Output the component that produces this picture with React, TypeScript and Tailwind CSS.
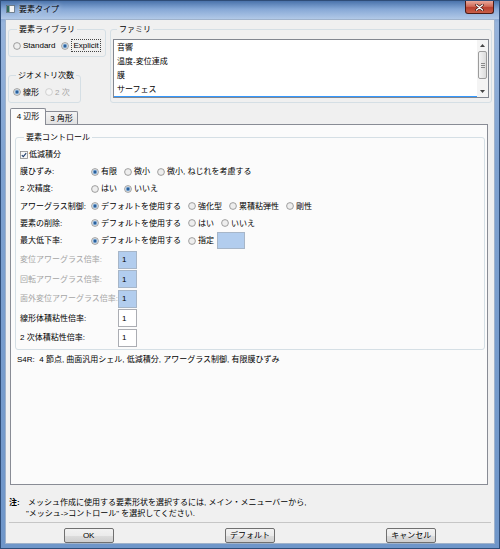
import React from "react"

// Win7 style "要素タイプ" dialog

function RadioMark({ checked = false, disabled = false }: { checked?: boolean; disabled?: boolean }) {
  return (
    <svg width="8" height="8" viewBox="0 0 8 8" className="shrink-0">
      <circle
        cx="4"
        cy="4"
        r="3.4"
        fill={disabled ? "#f6f6f6" : "#eeeeee"}
        stroke={disabled ? "#c8c8c8" : "#8a8a8a"}
        strokeWidth="0.8"
      />
      {checked && <circle cx="4" cy="4" r="1.9" fill="#2a5f99" stroke="#86b4e2" strokeWidth="0.7" />}
    </svg>
  )
}

function Radio({
  label,
  checked,
  disabled,
  focus,
}: {
  label: string
  checked?: boolean
  disabled?: boolean
  focus?: boolean
}) {
  return (
    <span className="flex items-center gap-[2px] whitespace-nowrap">
      <RadioMark checked={checked} disabled={disabled} />
      <span
        className={`${disabled ? "text-[#a6a6a6]" : "text-black"} ${
          focus ? "border border-dotted border-[#444] px-[1px] leading-[11px]" : ""
        }`}
      >
        {label}
      </span>
    </span>
  )
}

function Row({ label, children }: { label: string; children: React.ReactNode }) {
  return (
    <div className="flex h-[17.2px] items-center">
      <span className="w-[71px] shrink-0 whitespace-nowrap">{label}</span>
      <div className="flex items-center gap-[7px]">{children}</div>
    </div>
  )
}

function NumRow({ label, disabled = false }: { label: string; disabled?: boolean }) {
  return (
    <div className="flex h-[19.5px] items-center">
      <span className={`w-[98px] shrink-0 whitespace-nowrap ${disabled ? "text-[#a6a6a6]" : ""}`}>{label}</span>
      <div
        className={`flex h-[18px] w-[19px] items-center border pl-[3px] ${
          disabled ? "border-[#a7b6c8] bg-[#b2cdee]" : "border-[#abadb3] bg-white"
        }`}
      >
        1
      </div>
    </div>
  )
}

function Button({ label }: { label: string }) {
  return (
    <button
      type="button"
      className="flex h-[15px] w-[50px] items-center justify-center rounded-[2px] border border-[#707070] bg-[linear-gradient(180deg,#f2f2f2_0%,#ebebeb_50%,#dddddd_51%,#cfcfcf_100%)] text-[8px] leading-none text-black"
    >
      {label}
    </button>
  )
}

export default function App() {
  return (
    <div className="flex h-[549px] w-[500px] flex-col border border-[#2f4d78] bg-[linear-gradient(180deg,#5a81b7_0%,#97b4dc_4%,#7fa2d0_30%,#6f96c9_100%)] font-['Liberation_Sans','Noto_Sans_CJK_JP',sans-serif] text-[8px] leading-[11px] text-black">
      {/* Title bar */}
      <div className="flex h-[18px] items-start bg-[linear-gradient(180deg,#4a73ab_0%,#86a8d6_45%,#b2c9e7_100%)]">
        <svg width="9" height="8" viewBox="0 0 9 8" className="ml-[5px] mt-[4px] shrink-0">
          <rect x="0.5" y="0.5" width="8" height="7" fill="#f4f4f4" stroke="#5d6b78" strokeWidth="0.8" />
          <rect x="1" y="1" width="2.5" height="6" fill="#2f6b5c" />
        </svg>
        <span className="ml-[4px] mt-[3px] [text-shadow:0_0_5px_rgba(255,255,255,0.95)]">要素タイプ</span>
        <div className="ml-auto mr-[5px] flex h-[13px] w-[29px] items-center justify-center rounded-b-[3px] border border-t-0 border-[#4b1b16] bg-[linear-gradient(180deg,#e9a99b_0%,#d06a58_45%,#b8402f_55%,#c9604a_100%)]">
          <svg width="9" height="7" viewBox="0 0 9 7">
            <path d="M1.5 1 L7.5 6 M7.5 1 L1.5 6" stroke="#3a1410" strokeWidth="2.6" strokeLinecap="round" />
            <path d="M1.5 1 L7.5 6 M7.5 1 L1.5 6" stroke="#ffffff" strokeWidth="1.4" strokeLinecap="round" />
          </svg>
        </div>
      </div>

      {/* Client area */}
      <div className="mx-[4px] mb-[4px] flex flex-1 flex-col border border-[#9fb2cb] bg-[#f0f0f0] px-[2px] pt-[4px]">
        {/* Top section */}
        <div className="flex gap-[4px]">
          <div className="flex w-[98px] shrink-0 flex-col">
            <fieldset className="rounded-[3px] border border-[#d5dfe5] px-[4px] pb-[4px] pt-[4px]">
              <legend className="ml-[4px] whitespace-nowrap px-[2px]">要素ライブラリ</legend>
              <div className="flex h-[13px] items-center gap-[6px]">
                <Radio label="Standard" />
                <Radio label="Explicit" checked focus />
              </div>
            </fieldset>
            <fieldset className="mt-[13px] w-[68px] rounded-[3px] border border-[#d5dfe5] px-[4px] pb-[4px] pt-[5px]">
              <legend className="ml-[3px] whitespace-nowrap px-[2px]">ジオメトリ次数</legend>
              <div className="flex h-[12px] items-center gap-[6px]">
                <Radio label="線形" checked />
                <Radio label="2 次" disabled />
              </div>
            </fieldset>
          </div>
          <fieldset className="flex-1 rounded-[3px] border border-[#d5dfe5] px-[2px] pb-[3px] pt-[4px]">
            <legend className="ml-[4px] px-[2px]">ファミリ</legend>
            <div className="flex h-[59px] overflow-hidden border border-[#828790] bg-white">
              <div className="flex-1 overflow-hidden">
                {["音響", "温度-変位連成", "膜", "サーフェス"].map((item) => (
                  <div key={item} className="flex h-[14px] items-center pl-[3px]">
                    {item}
                  </div>
                ))}
                <div className="h-[2px] bg-[#3399ff]" />
              </div>
              <div className="flex w-[11px] flex-col items-center bg-[#f4f4f4]">
                <div className="flex h-[11px] items-center justify-center">
                  <svg width="5" height="3" viewBox="0 0 5 3">
                    <path d="M0 3 L2.5 0 L5 3 Z" fill="#444" />
                  </svg>
                </div>
                <div className="flex h-[28px] w-[9px] flex-col items-center justify-center gap-[1px] rounded-[2px] border border-[#9c9c9c] bg-[linear-gradient(90deg,#f4f4f4,#dcdcdc)]">
                  <div className="h-px w-[4px] bg-[#8a8a8a]" />
                  <div className="h-px w-[4px] bg-[#8a8a8a]" />
                  <div className="h-px w-[4px] bg-[#8a8a8a]" />
                </div>
                <div className="flex-1" />
                <div className="flex h-[11px] items-center justify-center">
                  <svg width="5" height="3" viewBox="0 0 5 3">
                    <path d="M0 0 L5 0 L2.5 3 Z" fill="#444" />
                  </svg>
                </div>
              </div>
            </div>
          </fieldset>
        </div>

        {/* Tabs */}
        <div className="ml-[2px] mr-[4px] mt-[5px] flex flex-col">
          <div className="relative z-10 flex items-end">
            <div className="-mb-px flex h-[17px] w-[36px] items-center justify-center rounded-t-[2px] border border-b-0 border-[#898c95] bg-[#fbfbfb] pb-[1px]">
              4 辺形
            </div>
            <div className="flex h-[13px] w-[32px] items-center justify-center rounded-tr-[2px] border border-l-0 border-b-0 border-[#898c95] bg-[linear-gradient(180deg,#f3f3f3,#e1e1e1)]">
              3 角形
            </div>
          </div>
          <div className="flex h-[361px] flex-col border border-[#898c95] bg-[#fbfbfb] pl-[4px] pr-[2px] pt-[7px]">
            <fieldset className="rounded-[3px] border border-[#d5dfe5] px-[4px] pb-[1px] pt-[3px]">
              <legend className="ml-[4px] px-[2px]">要素コントロール</legend>
              <div className="flex h-[17.2px] items-center gap-[1px]">
                <svg width="8" height="8" viewBox="0 0 8 8" className="shrink-0">
                  <rect x="0.5" y="0.5" width="7" height="7" fill="#f7f7f7" stroke="#8a8a8a" strokeWidth="0.8" />
                  <path d="M1.8 4.1 L3.3 5.7 L6.2 2.1" fill="none" stroke="#22406e" strokeWidth="1.1" />
                </svg>
                <span>低減積分</span>
              </div>
              <Row label="膜ひずみ:">
                <Radio label="有限" checked />
                <Radio label="微小" />
                <Radio label="微小, ねじれを考慮する" />
              </Row>
              <Row label="2 次精度:">
                <Radio label="はい" />
                <Radio label="いいえ" checked />
              </Row>
              <Row label="アワーグラス制御:">
                <Radio label="デフォルトを使用する" checked />
                <Radio label="強化型" />
                <Radio label="累積粘弾性" />
                <Radio label="剛性" />
              </Row>
              <Row label="要素の削除:">
                <Radio label="デフォルトを使用する" checked />
                <Radio label="はい" />
                <Radio label="いいえ" />
              </Row>
              <Row label="最大低下率:">
                <Radio label="デフォルトを使用する" checked />
                <span className="flex items-center gap-[3px]">
                  <Radio label="指定" />
                  <span className="h-[17px] w-[28px] border border-[#a7b6c8] bg-[#b2cdee]" />
                </span>
              </Row>
              <div className="mt-[1px]">
                <NumRow label="変位アワーグラス倍率:" disabled />
                <NumRow label="回転アワーグラス倍率:" disabled />
                <NumRow label="面外変位アワーグラス倍率:" disabled />
                <NumRow label="線形体積粘性倍率:" />
                <NumRow label="2 次体積粘性倍率:" />
              </div>
            </fieldset>
            <div className="ml-[2px] mt-[4px] whitespace-pre">
              S4R:  4 節点, 曲面汎用シェル, 低減積分, アワーグラス制御, 有限膜ひずみ
            </div>
          </div>
        </div>

        {/* Note */}
        <div className="mt-[12px] flex px-[1px]">
          <span className="w-[19px] shrink-0 font-bold">注:</span>
          <div>
            <div>メッシュ作成に使用する要素形状を選択するには, メイン・メニューバーから,</div>
            <div className="-ml-[2px]">{'"メッシュ->コントロール" を選択してください.'}</div>
          </div>
        </div>

        <div className="mx-[1px] mt-[3px] h-px bg-[#c6c6c6]" />

        <div className="mt-[5px] flex justify-around">
          <Button label="OK" />
          <Button label="デフォルト" />
          <Button label="キャンセル" />
        </div>
      </div>
    </div>
  )
}
